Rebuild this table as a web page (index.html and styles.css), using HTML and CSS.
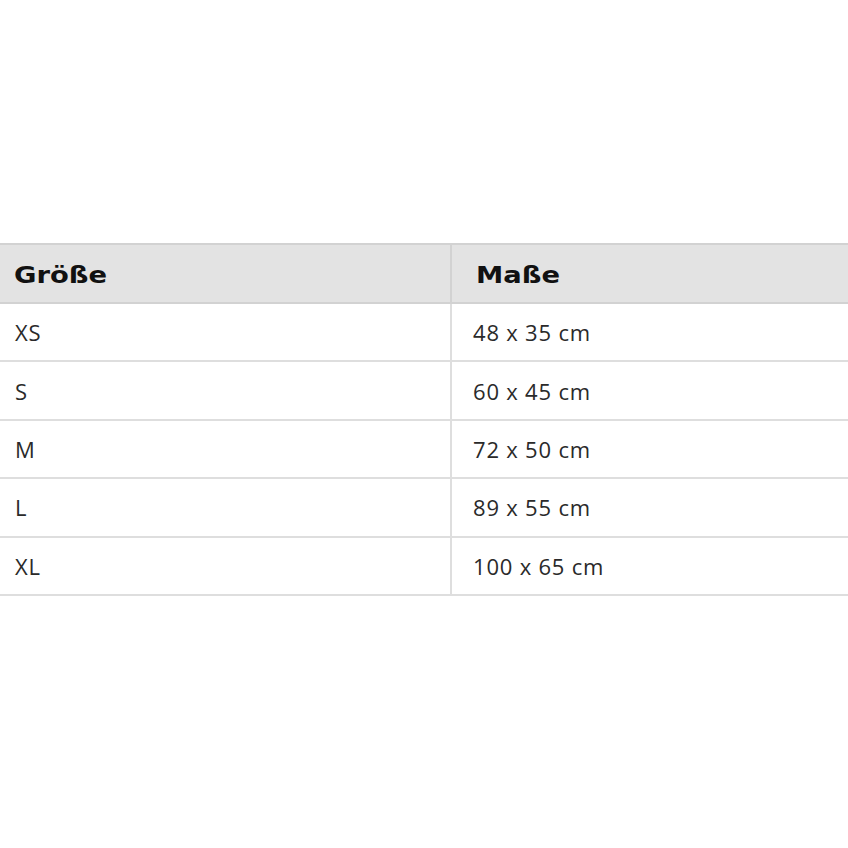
FILE: index.html
```html
<!DOCTYPE html>
<html lang="de">
<head>
<meta charset="utf-8">
<link rel="stylesheet" href="styles.css">
</head>
<body>
<div class="wrap">
<table class="size-table">
  <colgroup>
    <col class="col-size">
    <col class="col-dim">
  </colgroup>
  <thead>
    <tr><th><span class="head-label">Größe</span></th><th><span class="head-label">Maße</span></th></tr>
  </thead>
  <tbody>
    <tr><td>XS</td><td>48 x 35 cm</td></tr>
    <tr><td>S</td><td>60 x 45 cm</td></tr>
    <tr><td>M</td><td>72 x 50 cm</td></tr>
    <tr><td>L</td><td>89 x 55 cm</td></tr>
    <tr><td>XL</td><td>100 x 65 cm</td></tr>
  </tbody>
</table>
</div>
</body>
</html>
```
FILE: styles.css
```css
html, body {
  margin: 0;
  padding: 0;
  background: #ffffff;
  overflow: hidden;
}
.wrap {
  padding-top: 243px;
  margin-left: -2px;
}
.size-table {
  width: 860px;
  border-collapse: collapse;
  table-layout: fixed;
}
.col-size {
  width: 452px;
}
.size-table th,
.size-table td {
  text-align: left;
  border: 2px solid #dedede;
}
.size-table th {
  background: #e3e3e3;
  border-color: #d2d2d2;
  height: 55px;
  padding: 2px 0 0 14px;
  font-family: "DejaVu Sans", sans-serif;
  font-weight: 700;
  font-size: 23px;
  color: #111111;
}
.head-label {
  display: inline-block;
  transform: scaleX(1.19);
  transform-origin: left center;
}
.size-table th:last-child {
  padding-left: 24px;
}
.size-table td {
  height: 56.4px;
  padding: 0 0 0 15px;
  font-family: "Open Sans", sans-serif;
  font-size: 22px;
  letter-spacing: 0.8px;
  color: #2a2a2a;
}
.size-table td:last-child {
  padding-left: 21px;
}
```
